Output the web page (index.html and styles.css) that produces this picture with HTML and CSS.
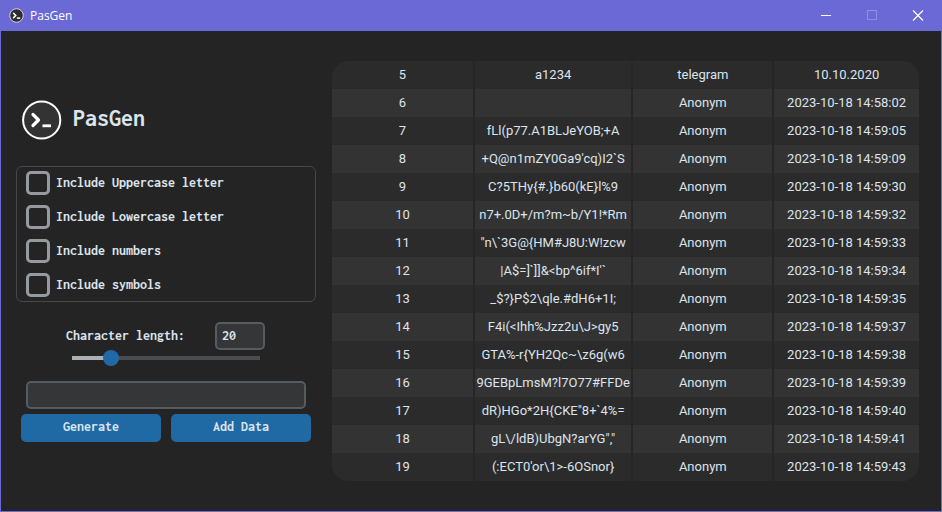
FILE: index.html
```html
<!DOCTYPE html>
<html lang="en">
<head>
<meta charset="utf-8">
<title>PasGen</title>
<link rel="stylesheet" href="styles.css">
</head>
<body>
<div class="window">
  <header class="titlebar">
    <svg class="titlebar-icon" viewBox="0 0 40 40" aria-hidden="true">
      <circle cx="20" cy="20" r="18" fill="#2d2d2d" stroke="#fff" stroke-width="2"/>
      <path d="M11 13l7 7-7 7" fill="none" stroke="#fff" stroke-width="4"/>
      <path d="M21 27h9" stroke="#fff" stroke-width="4"/>
    </svg>
    <span class="titlebar-name">PasGen</span>
    <button class="winbtn" type="button" aria-label="Minimize"><svg viewBox="0 0 10 10"><path d="M0 4.5h10" stroke="#fff"/></svg></button>
    <button class="winbtn" type="button" aria-label="Maximize" disabled><svg viewBox="0 0 10 10"><rect x=".5" y="-.5" width="9" height="9" fill="none" stroke="#908de2"/></svg></button>
    <button class="winbtn" type="button" aria-label="Close"><svg viewBox="0 0 10 10"><path d="M0 -.5l10 10M10 -.5L0 9.500" stroke="#fff" stroke-width="1.2"/></svg></button>
  </header>
  <main class="content">
    <form class="panel">
      <h1 class="brand">
        <svg class="brand-icon" viewBox="0 0 40 40" aria-hidden="true">
          <circle cx="19.700" cy="20" r="18.600" fill="#333" stroke="#fff" stroke-width="2"/>
          <path d="M11 14.500l5.500 5.500-5.500 5.500" fill="none" stroke="#fff" stroke-width="3.200" stroke-linecap="round" stroke-linejoin="round"/>
          <path d="M20.500 25.800h8.500" stroke="#fff" stroke-width="2.800"/>
        </svg>
        <span class="brand-name">PasGen</span>
      </h1>
      <div class="options">
        <label class="option"><input type="checkbox"><span class="text">Include Uppercase letter</span></label>
        <label class="option"><input type="checkbox"><span class="text">Include Lowercase letter</span></label>
        <label class="option"><input type="checkbox"><span class="text">Include numbers</span></label>
        <label class="option"><input type="checkbox"><span class="text">Include symbols</span></label>
      </div>
      <div class="length">
        <label class="text" for="length">Character length:</label>
        <input class="field" id="length" type="text" value="20">
      </div>
      <input class="slider" type="range" min="0" max="100" value="20" aria-label="Character length">
      <input class="field result" type="text" aria-label="Generated password">
      <div class="actions">
        <button type="button">Generate</button>
        <button type="button">Add Data</button>
      </div>
    </form>
    <table class="records">
      <colgroup><col class="col-id"><col class="col-password"><col class="col-name"><col></colgroup>
      <tbody>
        <tr><td>5</td><td>a1234</td><td>telegram</td><td>10.10.2020</td></tr>
        <tr><td>6</td><td></td><td>Anonym</td><td>2023-10-18 14:58:02</td></tr>
        <tr><td>7</td><td>fLl(p77.A1BLJeYOB;+A</td><td>Anonym</td><td>2023-10-18 14:59:05</td></tr>
        <tr><td>8</td><td>+Q@n1mZY0Ga9'cq)I2`S</td><td>Anonym</td><td>2023-10-18 14:59:09</td></tr>
        <tr><td>9</td><td>C?5THy{#.}b60(kE}l%9</td><td>Anonym</td><td>2023-10-18 14:59:30</td></tr>
        <tr><td>10</td><td>n7+.0D+/m?m~b/Y1!*Rm</td><td>Anonym</td><td>2023-10-18 14:59:32</td></tr>
        <tr><td>11</td><td>"n\`3G@{HM#J8U:W!zcw</td><td>Anonym</td><td>2023-10-18 14:59:33</td></tr>
        <tr><td>12</td><td>|A$=]`]]&amp;&lt;bp^6if*I'`</td><td>Anonym</td><td>2023-10-18 14:59:34</td></tr>
        <tr><td>13</td><td>_$?}P$2\qle.#dH6+1I;</td><td>Anonym</td><td>2023-10-18 14:59:35</td></tr>
        <tr><td>14</td><td>F4i(&lt;Ihh%Jzz2u\J&gt;gy5</td><td>Anonym</td><td>2023-10-18 14:59:37</td></tr>
        <tr><td>15</td><td>GTA%-r{YH2Qc~\z6g(w6</td><td>Anonym</td><td>2023-10-18 14:59:38</td></tr>
        <tr><td>16</td><td>9GEBpLmsM?l7O77#FFDe</td><td>Anonym</td><td>2023-10-18 14:59:39</td></tr>
        <tr><td>17</td><td>dR)HGo*2H{CKE"8+`4%=</td><td>Anonym</td><td>2023-10-18 14:59:40</td></tr>
        <tr><td>18</td><td>gL\/ldB)UbgN?arYG","</td><td>Anonym</td><td>2023-10-18 14:59:41</td></tr>
        <tr><td>19</td><td>(:ECT0'or\1&gt;-6OSnor}</td><td>Anonym</td><td>2023-10-18 14:59:43</td></tr>
      </tbody>
    </table>
  </main>
</div>
</body>
</html>
```
FILE: styles.css
```css
* { box-sizing: border-box; }
body {
  margin: 0;
  background: #242424;
  color: #dce4ee;
  font-family: Inconsolata, "Noto Sans Mono CJK SC", "DejaVu Sans Mono", monospace;
  font-size: 14px;
  font-weight: 700;
}
input, button { font: inherit; color: inherit; }
.window {
  min-height: 100vh;
  border: 1px solid #6b69d6;
  border-top: 0;
}
.titlebar {
  display: flex;
  align-items: center;
  height: 31px;
  padding-left: 8px;
  background: #6b69d6;
  color: #fff;
  font: 12px "Open Sans", sans-serif;
}
.titlebar-icon { width: 15px; height: 15px; }
.titlebar-name { flex: 1; margin-left: 6px; }
.winbtn {
  display: grid;
  place-items: center;
  width: 46px;
  height: 31px;
  padding: 0;
  border: 0;
  background: none;
}
.winbtn svg { width: 10px; height: 10px; overflow: visible; }
.content {
  display: grid;
  grid-template-columns: 300px minmax(0, 1fr);
  gap: 16px;
  align-items: start;
  padding: 30px 22px 30px 15px;
}
.panel { display: flex; flex-direction: column; }
.text { padding-bottom: 2px; }
.brand {
  display: flex;
  align-items: center;
  gap: 11px;
  height: 40px;
  margin: 39px 0 26px;
  padding-left: 6px;
  font-size: 24px;
  line-height: 32px;
}
.brand-icon { width: 40px; height: 40px; }
.brand-name { padding-bottom: 4px; }
.options {
  display: grid;
  gap: 10px;
  padding: 4px 9px;
  border: 1px solid #484848;
  border-radius: 6px;
}
.option { display: flex; align-items: center; gap: 6px; height: 24px; }
.option input {
  appearance: none;
  width: 24px;
  height: 24px;
  margin: 0;
  border: 3px solid #949a9f;
  border-radius: 5px;
}
.option input:checked { background: #1f6aa5; border-color: #1f6aa5; }
.length {
  display: flex;
  align-items: center;
  justify-content: space-between;
  height: 28px;
  margin: 20px 51px 0 50px;
}
.field {
  height: 28px;
  padding: 0 5px 2px;
  border: 2px solid #565b5e;
  border-radius: 5px;
  background: #343638;
}
.length .field { width: 50px; }
.slider {
  appearance: none;
  height: 16px;
  margin: 0 51px;
  background: linear-gradient(90deg, #aab0b5 20%, #4a4d50 20%) center / calc(100% - 10px) 4px no-repeat;
}
.slider::-webkit-slider-thumb {
  appearance: none;
  width: 16px;
  height: 16px;
  border-radius: 50%;
  background: #1f6aa5;
}
.result { margin: 15px 10px 5px; }
.actions { display: grid; grid-template-columns: 1fr 1fr; gap: 10px; padding: 0 5px; }
.actions button {
  height: 28px;
  padding: 0 0 4px;
  border: 0;
  border-radius: 5px;
  background: #1f6aa5;
}
.records {
  width: 100%;
  table-layout: fixed;
  border-collapse: separate;
  border-spacing: 0;
  border-radius: 16px;
  overflow: hidden;
  font: 13px Roboto, sans-serif;
  text-align: center;
}
.col-id, .col-name { width: 24%; }
.col-password { width: 27%; }
.records td {
  height: 28px;
  padding: 0 0 2px;
  background: #2b2b2b;
  border-left: 2px solid #262626;
  white-space: nowrap;
}
.records td:first-child { border-left: 0; }
.records tr:nth-child(even) td { background: #333; }
```
